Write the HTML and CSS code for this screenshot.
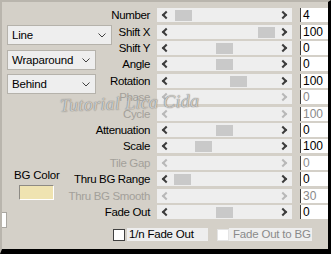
FILE: index.html
```html
<!DOCTYPE html>
<html lang="en">
<head>
    <meta charset="UTF-8">
    <title>Tile Settings</title>
    <link rel="stylesheet" href="styles.css">
</head>
<body>
    <div class="window">
        <div class="panel">
            <!-- Left side: mode dropdowns and background colour -->
            <div class="side">
                <div class="dropdown dropdown-wide">
                    <span>Line</span>
                    <svg class="chev" width="8" height="5" viewBox="0 0 8 5"><polyline points="0.5,0.5 4,4 7.5,0.5" fill="none" stroke="#404040" stroke-width="1"/></svg>
                </div>
                <div class="dropdown">
                    <span>Wraparound</span>
                    <svg class="chev" width="8" height="5" viewBox="0 0 8 5"><polyline points="0.5,0.5 4,4 7.5,0.5" fill="none" stroke="#404040" stroke-width="1"/></svg>
                </div>
                <div class="dropdown">
                    <span>Behind</span>
                    <svg class="chev" width="8" height="5" viewBox="0 0 8 5"><polyline points="0.5,0.5 4,4 7.5,0.5" fill="none" stroke="#404040" stroke-width="1"/></svg>
                </div>
                <div class="bg-color">
                    <span>BG Color</span>
                    <div class="swatch"></div>
                </div>
                <div class="stub"></div>
            </div>

            <!-- Right side: slider rows -->
            <div class="sliders">
                <label class="name">Number</label>
                <div class="track"><i class="arr-l"></i><b class="thumb" style="left: 18px"></b><i class="arr-r"></i></div>
                <div class="value">4</div>

                <label class="name">Shift X</label>
                <div class="track"><i class="arr-l"></i><b class="thumb" style="left: 101px"></b><i class="arr-r"></i></div>
                <div class="value">100</div>

                <label class="name">Shift Y</label>
                <div class="track"><i class="arr-l"></i><b class="thumb" style="left: 59px"></b><i class="arr-r"></i></div>
                <div class="value">0</div>

                <label class="name">Angle</label>
                <div class="track"><i class="arr-l"></i><b class="thumb" style="left: 59px"></b><i class="arr-r"></i></div>
                <div class="value">0</div>

                <label class="name">Rotation</label>
                <div class="track"><i class="arr-l"></i><b class="thumb" style="left: 73px"></b><i class="arr-r"></i></div>
                <div class="value">100</div>

                <label class="name off">Phase</label>
                <div class="track off"><i class="arr-l"></i><i class="arr-r"></i></div>
                <div class="value off">0</div>

                <label class="name off">Cycle</label>
                <div class="track off"><i class="arr-l"></i><i class="arr-r"></i></div>
                <div class="value off">100</div>

                <label class="name">Attenuation</label>
                <div class="track"><i class="arr-l"></i><b class="thumb" style="left: 59px"></b><i class="arr-r"></i></div>
                <div class="value">0</div>

                <label class="name">Scale</label>
                <div class="track"><i class="arr-l"></i><b class="thumb" style="left: 38px"></b><i class="arr-r"></i></div>
                <div class="value">100</div>

                <label class="name off">Tile Gap</label>
                <div class="track off"><i class="arr-l"></i><i class="arr-r"></i></div>
                <div class="value off">0</div>

                <label class="name">Thru BG Range</label>
                <div class="track"><i class="arr-l"></i><b class="thumb" style="left: 17px"></b><i class="arr-r"></i></div>
                <div class="value">0</div>

                <label class="name off">Thru BG Smooth</label>
                <div class="track off"><i class="arr-l"></i><i class="arr-r"></i></div>
                <div class="value off">30</div>

                <label class="name">Fade Out</label>
                <div class="track"><i class="arr-l"></i><b class="thumb" style="left: 59px"></b><i class="arr-r"></i></div>
                <div class="value">0</div>
            </div>

            <div class="checks">
                <div class="check"><span class="box"></span><span class="check-label">1/n Fade Out</span></div>
                <div class="check off"><span class="box"></span><span class="check-label">Fade Out to BG</span></div>
            </div>
        </div>

        <div class="watermark">Tutorial <span>Lica Cida</span></div>
    </div>
</body>
</html>
```

FILE: styles.css
```css
body {
    margin: 0;
    background-color: #d4d0c8;
    font-family: "Liberation Sans", Arial, sans-serif;
    font-size: 11px;
    letter-spacing: -0.2px;
    color: #000;
}

.window {
    position: relative;
    width: 331px;
    height: 254px;
    box-sizing: border-box;
    border-top: 2px solid #b9b5ad;
    border-left: 2px solid #b9b5ad;
    border-right: 3px solid #000;
    border-bottom: 5px solid #000;
    background-color: #d4d0c8;
    overflow: hidden;
}

.panel {
    display: grid;
    grid-template-columns: 1fr;
    grid-template-rows: 217px auto;
}

/* Left side */
.side {
    grid-area: 1 / 1;
    align-self: start;
    display: flex;
    flex-direction: column;
    align-items: flex-start;
    padding: 23px 0 0 5px;
}

.side > * {
    flex-shrink: 0;
}

.dropdown {
    display: flex;
    align-items: center;
    justify-content: space-between;
    box-sizing: border-box;
    width: 89px;
    height: 20px;
    margin-bottom: 4px;
    padding: 0 5px 0 4px;
    background-color: #eeeeee;
    border: 1px solid #b5b2ab;
    font-size: 11.5px;
}

.dropdown-wide {
    width: 105px;
    margin-bottom: 5px;
}

.bg-color {
    display: flex;
    flex-direction: column;
    align-items: center;
    margin: 70px 0 0 7px;
    line-height: 14px;
    font-size: 11.5px;
}

.swatch {
    width: 33px;
    height: 13px;
    margin-top: 3px;
    background-color: #efe3b1;
    border: 1px solid;
    border-color: #8d8a84 #fff #fff #8d8a84;
}

.stub {
    width: 5px;
    height: 14px;
    margin: 12px 0 0 -7px;
    background-color: #fff;
    border: 1px solid #a9a6a0;
}

/* Slider rows */
.sliders {
    grid-area: 1 / 1;
    display: grid;
    grid-template-columns: 148px 135px 30px;
    grid-auto-rows: 14px;
    row-gap: 2.4px;
    column-gap: 7px;
    padding-top: 6.3px;
}

.name {
    justify-self: end;
    align-self: center;
    font-size: 11.5px;
    letter-spacing: -0.35px;
    line-height: 14px;
    white-space: nowrap;
}

.name.off {
    color: #a3a09a;
}

.track {
    position: relative;
    display: flex;
    align-items: center;
    justify-content: space-between;
    padding: 0 6px;
    background-color: #eeeeee;
}

.arr-l, .arr-r {
    width: 4px;
    height: 4px;
    border: solid #3c3c3c;
    border-width: 0 0 2px 2px;
    transform: rotate(45deg);
}

.arr-r {
    transform: rotate(-135deg);
}

.track.off .arr-l, .track.off .arr-r {
    border-color: #b8b8b8;
}

.thumb {
    position: absolute;
    top: 2px;
    width: 17px;
    height: 11px;
    background-color: #c9c9c9;
}

.value {
    margin-left: 1px;
    padding-left: 2px;
    background-color: #fff;
    border-left: 1px solid #404040;
    font-size: 12px;
    letter-spacing: 0;
    line-height: 14px;
}

.value.off {
    color: #8a8a8a;
}

/* Checkbox row */
.checks {
    grid-row: 2;
    display: flex;
    margin: 9px 0 0 111px;
    font-size: 11.5px;
}

.check {
    display: flex;
    align-items: center;
    line-height: 13px;
    white-space: nowrap;
}

.box {
    width: 10px;
    height: 10px;
    margin-right: 2px;
    background-color: #fff;
    border: 1px solid #404040;
}

.check-label {
    width: 79px;
    padding-left: 2px;
    background-color: #eeeeee;
}

.check.off {
    margin-left: 9px;
}

.check.off .box {
    margin-right: 0;
    border-color: #e4e4e4;
}

.check.off .check-label {
    width: 79px;
    padding-left: 4px;
    color: #8a8a8a;
}

/* Watermark */
.watermark {
    position: absolute;
    left: 58px;
    top: 91px;
    font-family: "Liberation Serif", serif;
    font-style: italic;
    font-size: 18px;
    letter-spacing: 0.3px;
    color: rgba(255, 255, 255, 0.6);
    text-shadow: 0 0 1px #7d7973, 0 0 1px #7d7973;
    transform: rotate(-2deg);
    pointer-events: none;
}
```
